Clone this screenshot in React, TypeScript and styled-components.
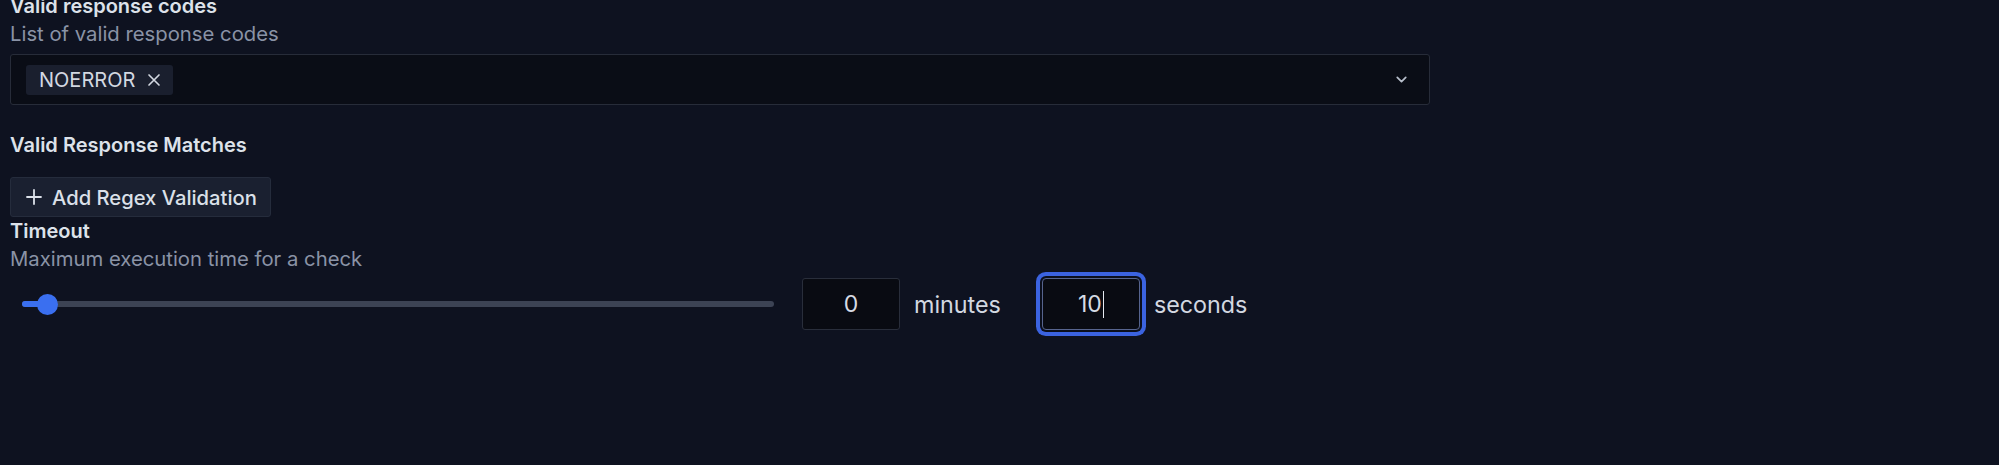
import styled, { createGlobalStyle } from 'styled-components'

const GlobalStyle = createGlobalStyle`
  html, body {
    margin: 0;
    padding: 0;
    background: #0e1220;
    overflow: hidden;
  }
  body {
    font-family: Inter, "Noto Sans", sans-serif;
    color: #dfe4ec;
  }
`

const Page = styled.div`
  width: 1999px;
  height: 465px;
  padding: 0 10px;
  margin-top: -8px;
  box-sizing: border-box;
`

const Field = styled.section<{ $gap?: number }>`
  display: flex;
  flex-direction: column;
  align-items: flex-start;
  margin-top: ${(p) => p.$gap ?? 0}px;
  width: 1420px;
`

const Label = styled.div`
  font-size: 20px;
  line-height: 28px;
  font-weight: 600;
  color: #dde2ea;
`

const Description = styled.div`
  font-size: 20.3px;
  line-height: 28px;
  color: #8a93a6;
`

const Select = styled.div`
  margin-top: 6px;
  width: 100%;
  height: 51px;
  box-sizing: border-box;
  display: flex;
  align-items: center;
  justify-content: space-between;
  padding: 0 19px 0 15px;
  background: #0a0d16;
  border: 1px solid #272c39;
  border-radius: 3px;
`

const Chip = styled.span`
  display: inline-flex;
  align-items: center;
  gap: 9px;
  height: 30px;
  padding: 0 9px 0 13px;
  background: #1a1f2e;
  border-radius: 3px;
  font-size: 20px;
  color: #d3d8e1;
`

const Button = styled.button`
  margin-top: 18px;
  height: 40px;
  display: inline-flex;
  align-items: center;
  gap: 6px;
  padding: 0 13px 0 11px;
  background: #1a2030;
  border: 1px solid #252c3c;
  border-radius: 3px;
  font-family: inherit;
  font-size: 20.2px;
  font-weight: 500;
  color: #dbe0e9;
`

const TimeoutRow = styled.div`
  margin-top: 5px;
  height: 52px;
  display: flex;
  align-items: center;
`

const Slider = styled.div`
  position: relative;
  width: 752px;
  height: 6px;
  margin: 0 28px 0 12px;
  background: #3c4354;
  border-radius: 3px;
`

const SliderFill = styled.div`
  height: 100%;
  background: #3a6ff0;
  border-radius: 3px;
`

const Thumb = styled.div`
  position: absolute;
  top: 50%;
  width: 21px;
  height: 21px;
  margin: -10.5px 0 0 -10.5px;
  border-radius: 50%;
  background: #3a6ff0;
`

const NumberBox = styled.div<{ $focused?: boolean }>`
  width: 98px;
  height: 52px;
  box-sizing: border-box;
  display: flex;
  align-items: center;
  justify-content: center;
  background: #090b12;
  border: 1px solid ${(p) => (p.$focused ? '#56648e' : '#292e3b')};
  border-radius: ${(p) => (p.$focused ? 4 : 3)}px;
  font-size: 23px;
  color: #d6dbe4;
  box-shadow: ${(p) =>
    p.$focused ? '0 0 0 2px #0b0f1c, 0 0 0 6px #3b63e0' : 'none'};
`

const Caret = styled.span`
  display: inline-block;
  width: 1px;
  height: 27px;
  margin-left: 1px;
  background: #e5e9f0;
`

const Unit = styled.span<{ $gap?: number }>`
  margin: 0 ${(p) => p.$gap ?? 0}px 0 14px;
  font-size: 23.3px;
  color: #d3d8e1;
`

const Chevron = () => (
  <svg width="17" height="17" viewBox="0 0 24 24" fill="none" stroke="#b8bfcc" strokeWidth="2.4" strokeLinecap="round" strokeLinejoin="round">
    <path d="m6 9 6 6 6-6" />
  </svg>
)

const Close = () => (
  <svg width="20" height="20" viewBox="0 0 24 24" fill="none" stroke="#d3d8e1" strokeWidth="2" strokeLinecap="round">
    <path d="M18 6 6 18M6 6l12 12" />
  </svg>
)

const Plus = () => (
  <svg width="24" height="24" viewBox="0 0 24 24" fill="none" stroke="#dbe0e9" strokeWidth="1.8" strokeLinecap="round">
    <path d="M5 12h14M12 5v14" />
  </svg>
)

export default function App() {
  const percent = 3.4
  return (
    <>
      <GlobalStyle />
      <Page>
        <Field>
          <Label>Valid response codes</Label>
          <Description>List of valid response codes</Description>
          <Select>
            <Chip>
              NOERROR
              <Close />
            </Chip>
            <Chevron />
          </Select>
        </Field>
        <Field $gap={26}>
          <Label>Valid Response Matches</Label>
          <Button>
            <Plus />
            Add Regex Validation
          </Button>
        </Field>
        <Field>
          <Label>Timeout</Label>
          <Description>Maximum execution time for a check</Description>
          <TimeoutRow>
            <Slider>
              <SliderFill style={{ width: `${percent}%` }} />
              <Thumb style={{ left: `${percent}%` }} />
            </Slider>
            <NumberBox>0</NumberBox>
            <Unit $gap={41}>minutes</Unit>
            <NumberBox $focused>
              10
              <Caret />
            </NumberBox>
            <Unit>seconds</Unit>
          </TimeoutRow>
        </Field>
      </Page>
    </>
  )
}
